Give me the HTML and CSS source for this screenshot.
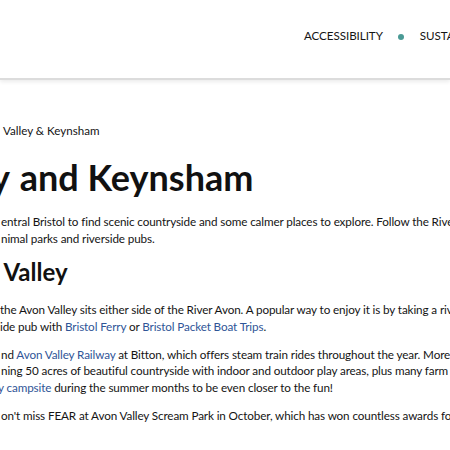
FILE: index.html
```html
<!DOCTYPE html>
<html lang="en">
<head>
<meta charset="utf-8">
<link rel="stylesheet" href="styles.css">
</head>
<body>
<header class="site-header">
  <nav class="top-nav">
    <a class="nav-item" href="#">ACCESSIBILITY</a>
    <span class="nav-dot"></span>
    <a class="nav-item" href="#">SUSTAINABILITY</a>
  </nav>
</header>
<main class="content">
  <div class="breadcrumb">Valley &amp; Keynsham</div>
  <h1 class="title"><span class="cut-h1">y</span> and Keynsham</h1>
  <p class="para p1">entral Bristol to find scenic countryside and some calmer places to explore. Follow the River Avon<br>nimal parks and riverside pubs.</p>
  <h2 class="subtitle"><span class="cut-h2">n</span> Valley</h2>
  <p class="para p2">the Avon Valley sits either side of the River Avon. A popular way to enjoy it is by taking a river<br>ide pub with <a href="#">Bristol Ferry</a> or <a href="#">Bristol Packet Boat Trips</a>.</p>
  <p class="para p3">nd <a href="#">Avon Valley Railway</a> at Bitton, which offers steam train rides throughout the year. More<br>ning 50 acres of beautiful countryside with indoor and outdoor play areas, plus many farm animals<br><a href="#"><span class="cut-y">y</span> campsite</a> during the summer months to be even closer to the fun!</p>
  <p class="para p4">on't miss FEAR at Avon Valley Scream Park in October, which has won countless awards for</p>
</main>
</body>
</html>
```
FILE: styles.css
```css
html, body {
  margin: 0;
  padding: 0;
  background: #fff;
  overflow: hidden;
  width: 450px;
  height: 450px;
}
body {
  font-family: Lato, "Open Sans", sans-serif;
  color: #141414;
}
.site-header {
  height: 78px;
  background: #fff;
  border-bottom: 2px solid #dcdcdc;
  box-shadow: 0 2px 4px rgba(0,0,0,0.08);
  position: relative;
  overflow: hidden;
}
.top-nav {
  display: flex;
  align-items: center;
  white-space: nowrap;
  padding-top: 28px;
  padding-left: 304px;
}
.nav-item {
  color: #141414;
  text-decoration: none;
  font-size: 11.6px;
  letter-spacing: -0.05px;
  line-height: 16px;
  flex-shrink: 0;
}
.nav-dot {
  flex: 0 0 6px;
  width: 6px;
  height: 6px;
  border-radius: 50%;
  background: #4a9a95;
  margin: 2px 16px 0 15px;
}
.content {
  white-space: nowrap;
  padding-top: 43px;
}
.breadcrumb {
  font-size: 11.6px;
  line-height: 16px;
  margin-left: 3px;
}
.title {
  font-family: Lato, sans-serif;
  font-weight: 700;
  font-size: 36px;
  line-height: 42px;
  margin: 17px 0 0 0;
  color: #111;
}
.cut-h1 {
  margin-left: -9px;
  margin-right: 1px;
}
.para {
  font-size: 11.7px;
  letter-spacing: -0.12px;
  line-height: 16.6px;
  margin: 15px 0 0 1px;
}
.subtitle {
  font-family: Lato, sans-serif;
  font-weight: 700;
  font-size: 24px;
  line-height: 28px;
  margin: 11.5px 0 0 0;
  color: #111;
}
.cut-h2 {
  margin-left: -17px;
  margin-right: 2px;
}
.p2 { margin-top: 15.5px; margin-left: 0; }
.p3 { margin-top: 11.5px; }
.p4 { margin-top: 11.8px; }
.cut-y { margin-left: -3px; }
a {
  color: #2f5597;
  text-decoration: none;
}
```
